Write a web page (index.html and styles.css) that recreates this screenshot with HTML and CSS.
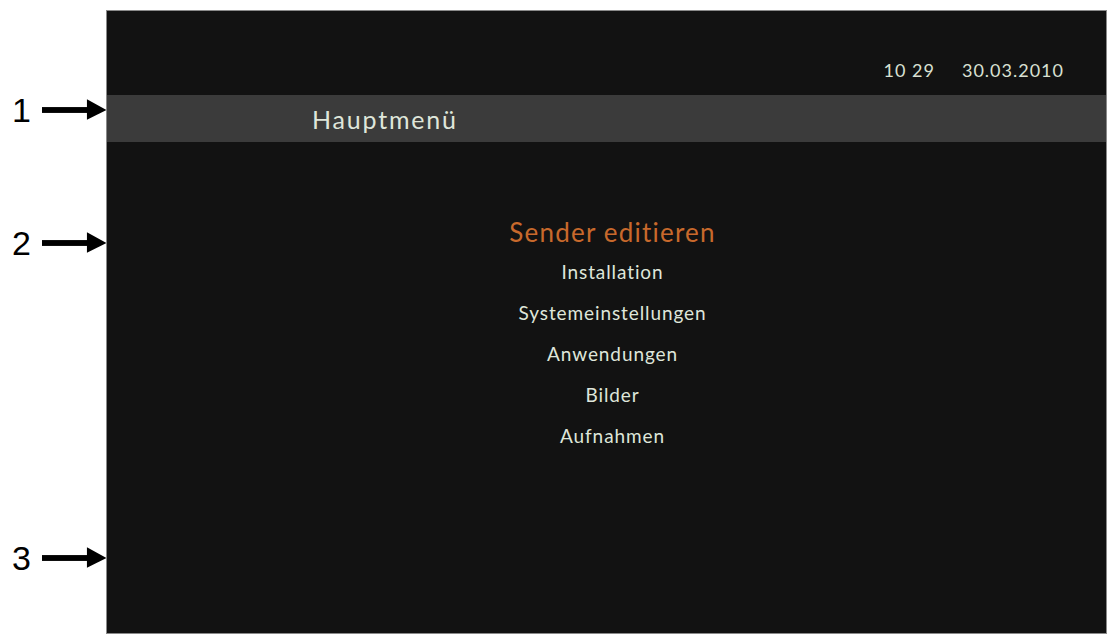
FILE: index.html
```html
<!DOCTYPE html>
<html lang="de">
<head>
<meta charset="utf-8">
<title>Hauptmenü</title>
<link rel="stylesheet" href="styles.css">
</head>
<body>
<div class="page">
  <div class="notes">
    <div class="note n1"><span class="num">1</span><svg class="arrow" width="66" height="22" viewBox="0 0 66 22"><rect x="0" y="8" width="50" height="6"/><polygon points="46,0 66,11 46,21"/></svg></div>
    <div class="note n2"><span class="num">2</span><svg class="arrow" width="66" height="22" viewBox="0 0 66 22"><rect x="0" y="8" width="50" height="6"/><polygon points="46,0 66,11 46,21"/></svg></div>
    <div class="note n3"><span class="num">3</span><svg class="arrow" width="66" height="22" viewBox="0 0 66 22"><rect x="0" y="8" width="50" height="6"/><polygon points="46,0 66,11 46,21"/></svg></div>
  </div>
  <div class="screen">
    <div class="top"><span class="time">10 29</span><span class="date">30.03.2010</span></div>
    <div class="titlebar">Hauptmenü</div>
    <ul class="menu">
      <li class="active">Sender editieren</li>
      <li>Installation</li>
      <li>Systemeinstellungen</li>
      <li>Anwendungen</li>
      <li>Bilder</li>
      <li>Aufnahmen</li>
    </ul>
  </div>
</div>
</body>
</html>
```
FILE: styles.css
```css
html, body {
  margin: 0;
  padding: 0;
  background: #ffffff;
}
body {
  width: 1112px;
  height: 640px;
  overflow: hidden;
  font-family: "Lato", "Liberation Sans", sans-serif;
}
.page {
  display: flex;
  padding-top: 10px;
}
.notes {
  width: 106px;
  flex: none;
  display: flex;
  flex-direction: column;
}
.note {
  height: 30px;
  display: flex;
  align-items: center;
  padding-left: 12px;
  gap: 8px;
}
.n1 { margin-top: 85px; }
.n2 { margin-top: 103px; }
.n3 { margin-top: 285px; }
.num {
  font-family: "Liberation Sans", sans-serif;
  font-size: 34px;
  line-height: 30px;
  color: #000;
  width: 20px;
}
.arrow { fill: #000; margin-left: 2px; }
.screen {
  width: 1001px;
  height: 624px;
  box-sizing: border-box;
  background: #121212;
  border: 1px solid #8a8a8a;
  display: flex;
  flex-direction: column;
}
.top {
  height: 84px;
  box-sizing: border-box;
  display: flex;
  justify-content: flex-end;
  align-items: flex-start;
  padding-right: 42px;
  padding-top: 48px;
  gap: 27px;
  color: #d9e0d2;
  font-size: 18px;
  line-height: 22px;
  letter-spacing: 1px;
}
.titlebar {
  height: 47px;
  background: #3b3b3b;
  color: #dfe6da;
  font-size: 25px;
  letter-spacing: 1.8px;
  line-height: 49px;
  padding-left: 205px;
}
.menu {
  list-style: none;
  margin: 0;
  padding: 71px 0 0 12px;
  display: flex;
  flex-direction: column;
  align-items: center;
}
.menu li {
  color: #dfe6da;
  font-size: 19px;
  height: 41px;
  line-height: 41px;
  letter-spacing: 0.9px;
}
.menu li.active {
  color: #c8692c;
  font-size: 26px;
  letter-spacing: 1.2px;
  height: 38px;
  line-height: 38px;
}
```
